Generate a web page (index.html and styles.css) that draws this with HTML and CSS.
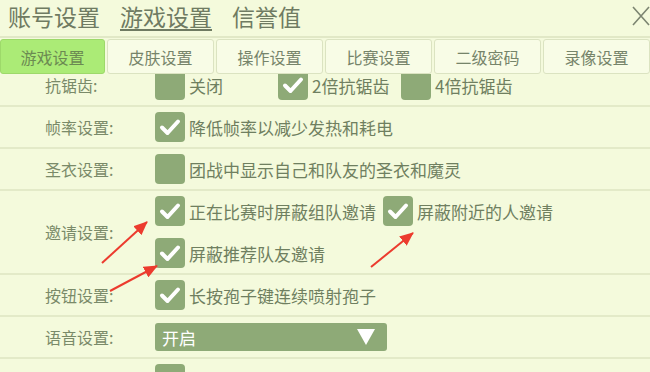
FILE: index.html
```html
<!DOCTYPE html>
<html lang="zh">
<head>
<meta charset="utf-8">
<link rel="stylesheet" href="styles.css">
</head>
<body>
<div class="page">
  <header class="header">
    <div class="titles">
      <span class="title">账号设置</span>
      <span class="title active">游戏设置</span>
      <span class="title">信誉值</span>
    </div>
    <svg class="close" width="18" height="22" viewBox="0 0 18 22"><path d="M1 2 L17 20 M17 2 L1 20" stroke="#7c8571" stroke-width="1.6" fill="none"/></svg>
  </header>
  <nav class="tabs">
    <div class="tab on">游戏设置</div>
    <div class="tab">皮肤设置</div>
    <div class="tab">操作设置</div>
    <div class="tab">比赛设置</div>
    <div class="tab">二级密码</div>
    <div class="tab">录像设置</div>
  </nav>
  <div class="list">
    <div class="rows">
      <div class="row">
        <div class="label">抗锯齿:</div>
        <div class="opts">
          <div class="opt"><span class="cb"></span><span>关闭</span></div>
          <div class="opt"><span class="cb"><svg viewBox="0 0 30 30"><path d="M7 15.5 L12.5 21 L23 9.5"/></svg></span><span>2倍抗锯齿</span></div>
          <div class="opt"><span class="cb"></span><span>4倍抗锯齿</span></div>
        </div>
      </div>
      <div class="row">
        <div class="label">帧率设置:</div>
        <div class="opts">
          <div class="opt"><span class="cb"><svg viewBox="0 0 30 30"><path d="M7 15.5 L12.5 21 L23 9.5"/></svg></span><span>降低帧率以减少发热和耗电</span></div>
        </div>
      </div>
      <div class="row">
        <div class="label">圣衣设置:</div>
        <div class="opts">
          <div class="opt"><span class="cb"></span><span>团战中显示自己和队友的圣衣和魔灵</span></div>
        </div>
      </div>
      <div class="row">
        <div class="label">邀请设置:</div>
        <div class="opts wrap">
          <div class="opt"><span class="cb"><svg viewBox="0 0 30 30"><path d="M7 15.5 L12.5 21 L23 9.5"/></svg></span><span>正在比赛时屏蔽组队邀请</span></div>
          <div class="opt"><span class="cb"><svg viewBox="0 0 30 30"><path d="M7 15.5 L12.5 21 L23 9.5"/></svg></span><span>屏蔽附近的人邀请</span></div>
          <div class="opt"><span class="cb"><svg viewBox="0 0 30 30"><path d="M7 15.5 L12.5 21 L23 9.5"/></svg></span><span>屏蔽推荐队友邀请</span></div>
        </div>
      </div>
      <div class="row">
        <div class="label">按钮设置:</div>
        <div class="opts">
          <div class="opt"><span class="cb"><svg viewBox="0 0 30 30"><path d="M7 15.5 L12.5 21 L23 9.5"/></svg></span><span>长按孢子键连续喷射孢子</span></div>
        </div>
      </div>
      <div class="row">
        <div class="label">语音设置:</div>
        <div class="opts">
          <div class="select"><span>开启</span><svg width="18" height="16" viewBox="0 0 18 16"><path d="M0 0 H18 L9 16 Z" fill="#fff"/></svg></div>
        </div>
      </div>
      <div class="row">
        <div class="label"></div>
        <div class="opts">
          <div class="opt"><span class="cb"></span><span></span></div>
        </div>
      </div>
    </div>
  </div>
  <svg class="arrows" width="650" height="372" viewBox="0 0 650 372">
    <defs>
      <marker id="ah" markerUnits="userSpaceOnUse" markerWidth="14" markerHeight="12" refX="13" refY="6" orient="auto">
        <path d="M0 0 L14 6 L0 12 Z" fill="#ec3b2e"/>
      </marker>
    </defs>
    <line x1="102" y1="263" x2="147" y2="222" stroke="#ec3b2e" stroke-width="2" marker-end="url(#ah)"/>
    <line x1="110" y1="291" x2="157" y2="266" stroke="#ec3b2e" stroke-width="2" marker-end="url(#ah)"/>
    <line x1="371" y1="267" x2="413" y2="233" stroke="#ec3b2e" stroke-width="2" marker-end="url(#ah)"/>
  </svg>
</div>
</body>
</html>
```
FILE: styles.css
```css
* { box-sizing: border-box; }
html, body { margin: 0; padding: 0; }
body {
  background: #f4fadc;
  font-family: "Noto Sans CJK SC", "Noto Sans", sans-serif;
  color: #74845f;
}
.page {
  position: relative;
  width: 650px;
  height: 372px;
  overflow: hidden;
}
.header {
  height: 38px;
  display: flex;
  justify-content: space-between;
  align-items: flex-start;
  border-bottom: 2px solid #e1e8c6;
}
.titles {
  display: flex;
  gap: 20px;
  padding-left: 8px;
}
.title {
  font-size: 23px;
  line-height: 32px;
  color: #6f7b62;
}
.title.active {
  text-decoration: underline;
  text-decoration-thickness: 2px;
  text-underline-offset: 3px;
}
.close { margin-top: 5px; margin-right: 0; }
.tabs {
  display: flex;
  gap: 2px;
  padding-top: 1px;
  height: 36px;
}
.tab {
  width: 107px;
  flex: none;
  height: 35px;
  display: flex;
  align-items: center;
  justify-content: center;
  font-size: 16px;
  color: #76846a;
  background: #f8fce6;
  border: 1px solid #dbe3c1;
  border-radius: 3px;
}
.tab.on {
  width: 105px;
  background: #abeb76;
  border-color: #9dd96a;
  color: #6b8a52;
}
.list {
  height: 300px;
  overflow: hidden;
}
.rows { margin-top: -9px; }
.row {
  display: flex;
  align-items: center;
  padding: 5px 0 5px 45px;
  border-bottom: 2px solid #e3eac8;
  min-height: 42px;
}
.label {
  width: 110px;
  flex: none;
  font-size: 16px;
  color: #7a8a69;
}
.opts {
  display: flex;
  flex-wrap: wrap;
  column-gap: 7px;
  row-gap: 12px;
  width: 420px;
}
.opt {
  display: flex;
  align-items: center;
  gap: 4px;
  min-width: 116px;
  font-size: 17px;
  color: #6f7f60;
}
.cb {
  width: 30px;
  height: 30px;
  flex: none;
  background: #8eaa77;
  border-radius: 4px;
  display: flex;
}
.cb svg { width: 30px; height: 30px; }
.cb path {
  fill: none;
  stroke: #fff;
  stroke-width: 4;
  stroke-linecap: round;
  stroke-linejoin: round;
}
.select {
  width: 232px;
  height: 28px;
  margin: 1px 0;
  background: #8eaa77;
  border-radius: 3px;
  display: flex;
  align-items: center;
  justify-content: space-between;
  padding: 0 12px 0 7px;
  color: #fff;
  font-size: 17px;
}
.arrows {
  position: absolute;
  left: 0;
  top: 0;
  pointer-events: none;
}
```
